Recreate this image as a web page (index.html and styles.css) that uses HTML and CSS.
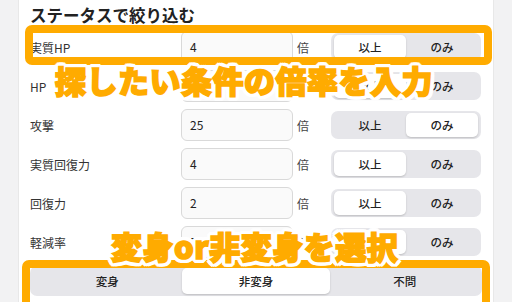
FILE: index.html
```html
<!DOCTYPE html>
<html lang="ja">
<head>
<meta charset="utf-8">
<link rel="stylesheet" href="styles.css">
</head>
<body>
<div class="page">
  <div class="panel">
    <h2 class="title">ステータスで絞り込む</h2>
    <div class="rows">
      <div class="row">
        <span class="label">実質HP</span>
        <span class="input">4</span>
        <span class="unit">倍</span>
        <div class="seg"><span class="opt on">以上</span><span class="opt">のみ</span></div>
      </div>
      <div class="row">
        <span class="label">HP</span>
        <span class="input">4</span>
        <span class="unit">倍</span>
        <div class="seg"><span class="opt on">以上</span><span class="opt">のみ</span></div>
      </div>
      <div class="row">
        <span class="label">攻撃</span>
        <span class="input">25</span>
        <span class="unit">倍</span>
        <div class="seg"><span class="opt">以上</span><span class="opt on">のみ</span></div>
      </div>
      <div class="row">
        <span class="label">実質回復力</span>
        <span class="input">4</span>
        <span class="unit">倍</span>
        <div class="seg"><span class="opt on">以上</span><span class="opt">のみ</span></div>
      </div>
      <div class="row">
        <span class="label">回復力</span>
        <span class="input">2</span>
        <span class="unit">倍</span>
        <div class="seg"><span class="opt on">以上</span><span class="opt">のみ</span></div>
      </div>
      <div class="row">
        <span class="label">軽減率</span>
        <span class="input">50</span>
        <span class="unit">倍</span>
        <div class="seg"><span class="opt on">以上</span><span class="opt">のみ</span></div>
      </div>
    </div>
    <div class="seg seg-wide"><span class="opt">変身</span><span class="opt on">非変身</span><span class="opt">不問</span></div>
  </div>

  <div class="hl hl-top"></div>
  <div class="hl hl-bottom"></div>
  <div class="note note-1">探したい条件の倍率を入力</div>
  <div class="note note-2">変身or非変身を選択</div>
</div>
</body>
</html>
```

FILE: styles.css
```css
html, body {
  margin: 0;
  padding: 0;
}
body {
  width: 512px;
  height: 302px;
  overflow: hidden;
  background: #f2f2f3;
  font-family: "Noto Sans CJK JP", "Noto Sans", sans-serif;
  color: #222;
}
.page {
  position: relative;
  width: 512px;
  height: 302px;
  overflow: hidden;
}
.panel {
  margin: 0 18px;
  height: 302px;
  background: #fff;
  border-left: 1px solid #e8e8e8;
  border-right: 1px solid #e8e8e8;
  box-sizing: border-box;
  padding: 5px 12px 0 11px;
}
.title {
  margin: 0 0 6px;
  font-size: 16.5px;
  line-height: 20px;
  font-weight: 700;
  color: #222;
}
.rows {
  display: flex;
  flex-direction: column;
  gap: 7px;
}
.row {
  display: grid;
  grid-template-columns: 151px 112px 38px 150px;
  align-items: center;
  height: 32px;
}
.label {
  font-size: 12px;
  color: #333;
}
.input {
  box-sizing: border-box;
  height: 32px;
  border: 1px solid #d9d9d9;
  border-radius: 6px;
  background: #fafafa;
  padding: 0 8px;
  font-size: 12px;
  line-height: 30px;
  color: #222;
}
.unit {
  font-size: 12px;
  color: #444;
  padding-left: 4px;
}
.seg {
  display: flex;
  height: 28px;
  box-sizing: border-box;
  padding: 2px 3px;
  background: #e6e6ea;
  border-radius: 7px;
}
.opt {
  flex: 1;
  display: flex;
  align-items: center;
  justify-content: center;
  font-size: 11.5px;
  font-weight: 500;
  color: #222;
  border-radius: 5px;
}
.opt.on {
  background: #fff;
  box-shadow: 0 1px 2px rgba(0, 0, 0, 0.18);
}
.seg-wide {
  margin-top: 8px;
  height: 30px;
  width: 452px;
}
.hl {
  position: absolute;
  box-sizing: border-box;
  border: 8px solid #ffab00;
  border-radius: 7px;
}
.hl-top {
  left: 25px;
  top: 25px;
  width: 467px;
  height: 40px;
}
.hl-bottom {
  left: 22px;
  top: 260px;
  width: 468px;
  height: 56px;
}
.note {
  position: absolute;
  font-family: "Noto Sans CJK JP", sans-serif;
  font-weight: 900;
  font-size: 31px;
  line-height: 36px;
  color: #ffab00;
  -webkit-text-stroke: 1.6px #ffab00;
  text-shadow:
    4px 0 0 #fff, -4px 0 0 #fff, 0 4px 0 #fff, 0 -4px 0 #fff,
    3px 3px 0 #fff, -3px 3px 0 #fff, 3px -3px 0 #fff, -3px -3px 0 #fff,
    4px 2px 0 #fff, -4px 2px 0 #fff, 4px -2px 0 #fff, -4px -2px 0 #fff,
    2px 4px 0 #fff, -2px 4px 0 #fff, 2px -4px 0 #fff, -2px -4px 0 #fff;
  white-space: nowrap;
  letter-spacing: 0.5px;
}
.note-1 {
  left: 55px;
  top: 62px;
}
.note-2 {
  left: 111px;
  top: 228px;
}
```
